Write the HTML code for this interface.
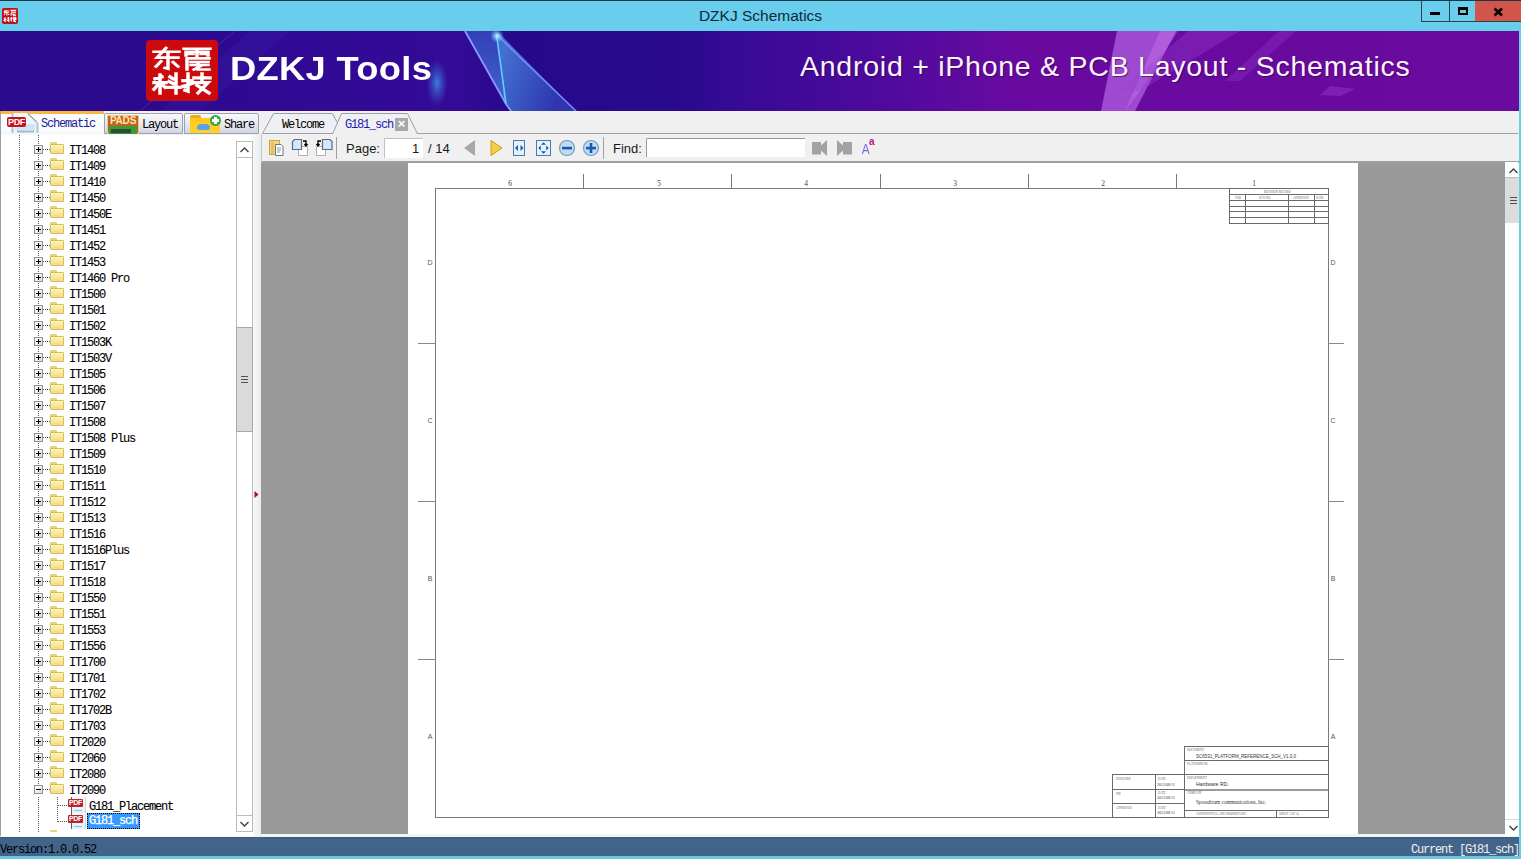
<!DOCTYPE html>
<html><head><meta charset="utf-8">
<style>
*{margin:0;padding:0;box-sizing:border-box}
html,body{width:1521px;height:859px;overflow:hidden;background:#f0f0f0;position:relative;font-family:"Liberation Sans",sans-serif}
div,span,i,b{position:absolute;display:block}
.mono{font-family:"Liberation Mono",monospace}
#title{left:0;top:0;width:1521px;height:31px;background:#69cdec;border-top:1px solid #1d4a63}
#title .t{left:0;top:6px;width:1521px;text-align:center;font-size:15.5px;line-height:18px;color:#0e2a3a}
#ticon{left:2px;top:6px;width:16px;height:17px;background:#c4161c;border-radius:2px;color:#fff;font-size:7px;line-height:8px;font-weight:bold;padding:1px 0 0 1px;letter-spacing:-0.5px}
.wb{top:-1px;height:22px;border:1px solid #2b3f4d;border-top:none;background:#69cdec}
#bmin{left:1421px;width:29px;border-right:none}
#bmax{left:1449px;width:27px}
#bcls{left:1475px;width:46px;background:#d2554a;border-left:none;border-right:none}
#banner{left:0;top:31px;width:1519px;height:80px;background:linear-gradient(90deg,#2a0b8c 0%,#2a0a8e 45%,#3a0a96 60%,#5c0aa0 75%,#6a0aa0 100%);overflow:hidden}
#rborder{left:1519px;top:31px;width:2px;height:828px;background:#69cdec}
#bborder{left:0;top:856px;width:1521px;height:3px;background:#6cc6e2}
#strip{left:0;top:833px;width:1519px;height:4px;background:#eef4fa}
#tabs{left:0;top:111px;width:1519px;height:24px;background:#f0f0f0}
#tree{left:0;top:135px;width:254px;height:701px;background:#fff;border-left:1px solid #a0a0a0;overflow:hidden}
#split{left:253px;top:135px;width:8px;height:701px;background:linear-gradient(90deg,#f6f8f9,#e8edf0)}
#toolbar{left:261px;top:134px;width:1258px;height:29px;background:#f0f0f0;border-left:1px solid #c8c8c8;border-bottom:2px solid #a0a0a0}
#doc{left:261px;top:163px;width:1244px;height:671px;background:#999}
#page{left:408px;top:163px;width:950px;height:671px;background:#fff}
#vscroll{left:1505px;top:162px;width:13px;height:674px;background:#fff}
#status{left:0;top:837px;width:1519px;height:19px;background:linear-gradient(180deg,#3c5a78 0,#43648a 2px,#43648a 17px,#3a6482 19px)}
#status .l{left:0;top:6px;font-family:"Liberation Mono",monospace;font-size:12px;letter-spacing:-1.2px;line-height:14px;color:#000}
#status .r{right:0px;top:6px;font-family:"Liberation Mono",monospace;font-size:12px;letter-spacing:-1.2px;line-height:14px;color:#f0f0f0}
/* tree */
.tx{left:69px;height:16px;-webkit-text-stroke:0.1px #000;font-family:"Liberation Mono",monospace;font-size:12px;letter-spacing:-1.2px;line-height:16px;color:#000;white-space:nowrap}
.box{left:34px;width:9px;height:9px;border:1px solid #919191;background:linear-gradient(135deg,#fff,#dcdcdc)}
.box b{left:1px;top:3px;width:5px;height:1px;background:#000}
.box i{left:3px;top:1px;width:1px;height:5px;background:#000}
.hd{left:43px;width:7px;height:1px;background:repeating-linear-gradient(90deg,#555 0 1px,transparent 1px 2px)}
.hd2{left:58px;width:10px;height:1px;background:repeating-linear-gradient(90deg,#555 0 1px,transparent 1px 2px)}
.vd{width:1px;background:repeating-linear-gradient(180deg,#555 0 1px,transparent 1px 2px)}
.fold{left:50px;width:14px;height:12px}
.fold:before{content:"";position:absolute;left:0;top:0;width:7px;height:3px;background:#e8d27a;border-radius:1px 1px 0 0}
.fold i{left:0;top:2px;width:14px;height:10px;background:linear-gradient(180deg,#fdf6b0,#f4d98c);border:1px solid #d8bb62;border-radius:1px}
.pdf{left:68px;width:16px;height:16px}
.pdf:before{content:"";position:absolute;left:3px;top:0;width:13px;height:16px;background:linear-gradient(180deg,#f4f8fc,#e4eef8);border-left:1px solid #50606e;border-right:1px solid #c8d8e8}
.pdf:after{content:"";position:absolute;left:6px;top:13px;width:8px;height:1px;background:#8ec0e8}
.pdf span{left:0;top:2px;width:15px;height:8px;border-radius:1px;background:#c0202a;color:#fff;font-size:7px;line-height:8px;font-weight:bold;text-align:center;letter-spacing:-0.3px}
.sel{-webkit-text-stroke:0.25px #fff;left:87px;width:53px;background:#3399ff;color:#fff;outline:1px dotted #000;outline-offset:-1px;padding-left:2px;height:16px;line-height:16px}
</style></head><body>
<div id="title"><div class="t">DZKJ Schematics</div><svg width="16" height="16" viewBox="0 0 72 61" preserveAspectRatio="none" style="position:absolute;left:2px;top:7px"><rect width="72" height="61" rx="8" fill="#c01018"/><g fill="none" stroke="#fff" stroke-width="5"><g transform="translate(0,8) scale(1,0.74) translate(0,-8)"><path d="M8 13 H33 M20 8 L11 21 H32 M22 16 V36 M15 26 L10 33 M27 27 L32 33"/><path d="M38 9 H64 M40 13 H62 M41 22 H63 M41 22 V37 M45 30 H62 M52 27 V37 L63 37"/></g><g transform="translate(0,34) scale(1,0.95) translate(0,-40)"><path d="M8 49 H20 M14 41 V60 M13 50 L8 56 M24 43 L27 45 M21 54 H34 M30 40 V60"/><path d="M37 47 H46 M42 40 V58 M48 44 H64 M49 49 H62 L52 60 M51 52 L63 60"/></g></g></svg>
<div id="bmin" class="wb"><i style="left:8px;top:12px;width:10px;height:3px;background:#000"></i></div>
<div id="bmax" class="wb"><i style="left:8px;top:7px;width:10px;height:8px;border:2px solid #000;border-top-width:3px"></i></div>
<div id="bcls" class="wb"><svg width="46" height="22" style="position:absolute;left:0;top:0"><path d="M19.5 8.5 L27 15.5 M27 8.5 L19.5 15.5" stroke="#000" stroke-width="2.6"/></svg></div>
</div>
<div style="left:0;top:0;width:1521px;height:1px;background:#15384c"></div>
<div id="banner"><svg width="1518" height="80" style="position:absolute;left:0;top:0">
<defs>
<linearGradient id="bg" x1="0" x2="1" y1="0" y2="0">
<stop offset="0.0000" stop-color="#2a0a8d"/><stop offset="0.0987" stop-color="#2b0a8e"/><stop offset="0.1975" stop-color="#300a94"/><stop offset="0.3028" stop-color="#340a96"/>
<stop offset="0.3423" stop-color="#240a8a"/><stop offset="0.4542" stop-color="#2a0a8e"/><stop offset="0.4806" stop-color="#360a94"/><stop offset="0.5662" stop-color="#4a0a9c"/><stop offset="0.6682" stop-color="#680aa0"/><stop offset="1.0000" stop-color="#6a0a9f"/>
</linearGradient>
<linearGradient id="bl" x1="0" x2="0" y1="0" y2="1"><stop offset="0" stop-color="#5a6ae0" stop-opacity="0.35"/><stop offset="1" stop-color="#4a7ae0" stop-opacity="0.6"/></linearGradient>
<radialGradient id="glow"><stop offset="0" stop-color="#c0f8ff" stop-opacity="1"/><stop offset="1" stop-color="#60c0ff" stop-opacity="0"/></radialGradient>
<radialGradient id="spot"><stop offset="0" stop-color="#3a8ce0" stop-opacity="0.9"/><stop offset="1" stop-color="#3a5ad0" stop-opacity="0"/></radialGradient>
<filter id="bl2"><feGaussianBlur stdDeviation="1.2"/></filter>
</defs>
<rect width="1518" height="80" fill="url(#bg)"/>
<polygon points="250,0 290,0 200,80 160,80" fill="#4a2ac0" opacity="0.18"/>
<line x1="235" y1="0" x2="140" y2="80" stroke="#6a5ae0" stroke-width="1" opacity="0.35"/>
<defs>
<linearGradient id="ab" x1="0" x2="0" y1="0" y2="1"><stop offset="0" stop-color="#3448c0"/><stop offset="1" stop-color="#4a78d8"/></linearGradient>
<linearGradient id="bc" x1="497" y1="40" x2="560" y2="60" gradientUnits="userSpaceOnUse"><stop offset="0" stop-color="#4a8ae0"/><stop offset="1" stop-color="#3040b8"/></linearGradient>
<filter id="soft" x="-20%" y="-20%" width="140%" height="140%"><feGaussianBlur stdDeviation="0.5"/></filter>
</defs>
<polygon points="465,0 497,0 507,73 511,80" fill="url(#ab)" opacity="0.85"/>
<polygon points="497,0 576,80 511,80 507,73" fill="url(#bc)" opacity="0.8"/>
<g filter="url(#soft)">
<polyline points="465,0 506,73 511,80" fill="none" stroke="#8a9aff" stroke-width="1.8"/>
<polyline points="496.5,3 506,73" fill="none" stroke="#60c8ff" stroke-width="1.8"/>
<line x1="497" y1="4" x2="576" y2="80" stroke="#7a8aff" stroke-width="1.6"/>
</g>
<circle cx="497" cy="5" r="7" fill="url(#glow)"/>
<ellipse cx="437" cy="52" rx="11" ry="24" fill="url(#spot)"/>
<polygon points="1117,0 1176,0 1135,80 1101,80" fill="#b060e0" opacity="0.75"/>
<polygon points="1160,0 1178,0 1140,60 1125,80" fill="#d080f0" opacity="0.35"/>
<polygon points="1188,0 1240,0 1140,60 1120,60" fill="#9a40d0" opacity="0.35"/>
<polygon points="1279,0 1296,0 1240,50 1225,50" fill="#9a40d0" opacity="0.3"/>
<polygon points="1330,55 1356,58 1340,65 1320,64" fill="#9a40d0" opacity="0.4"/>
</svg>
<div style="left:146px;top:9px;width:72px;height:61px;background:#cc0a0e;border-radius:4px"></div>
<svg width="72" height="61" style="position:absolute;left:146px;top:9px" fill="none" stroke="#fff" stroke-width="3.5" stroke-linecap="square">
<g transform="translate(0,8) scale(1,0.74) translate(0,-8)">
<path d="M8 13 H33 M20 8 L11 21 H32 M22 16 V36 L19 35 M15 26 L10 33 M27 27 L32 33"/>
<path d="M38 9 H64 M40 13 V18 M62 13 V18 M40 13 H62 M51 9 V19 M43 16 H47 M55 16 H59 M41 22 H63 M41 22 V37 M45 27 H62 M45 31 H62 M52 27 V37 L63 37 M55 32 L48 37"/>
</g>
<g transform="translate(0,34) scale(1,0.95) translate(0,-40)">
<path d="M9 45 L16 43 M8 49 H20 M14 41 V60 M13 50 L8 56 M15 50 L19 54 M24 43 L27 45 M23 48 L27 50 M21 54 H34 M30 40 V60"/>
<path d="M37 47 H46 M42 40 V58 L39 57 M37 53 L46 50 M48 44 H64 M56 40 V48 M49 49 H62 L52 60 M51 52 L63 60"/>
</g>
</svg>
<div id="dzkj" style="left:230px;top:18px;font-size:33px;font-weight:bold;color:#fff;letter-spacing:0.3px;line-height:40px;white-space:nowrap;transform:scaleX(1.1);transform-origin:0 0">DZKJ Tools</div>
<div style="left:800px;top:17px;font-size:28.5px;color:#fbf2ff;letter-spacing:0.75px;line-height:36px;white-space:nowrap;text-shadow:1px 1px 1px rgba(40,0,60,0.6)">Android + iPhone &amp; PCB Layout - Schematics</div>
</div>
<div id="rborder"></div>
<div id="bborder"></div><div id="strip"></div>
<div id="tabs">
<div style="left:0;top:0;width:104px;height:24px;background:linear-gradient(180deg,#fff,#f6f8fc);border-left:1px solid #a0a0a0"></div>
<div style="left:1px;top:0;width:103px;height:3px;background:#f6b840"></div>
<svg width="30" height="24" style="position:absolute;left:9px;top:0"><path d="M3 2.5 H19 L28.5 11.5 V23" fill="#f0f6fc" stroke="none"/><path d="M3 2 V23 H28.5 V11.5 L19 2 Z" fill="#eef5fb"/><path d="M3.5 2 V22 M28.5 12 V22" stroke="#b4c2ce" stroke-width="2"/><path d="M19 2.5 L28 11.5" stroke="#5a6470" stroke-width="1"/><rect x="6" y="13" width="20" height="6" fill="#cfe6f8"/><path d="M8 20.5 H25" stroke="#a6b8c6" stroke-width="2"/></svg>
<div style="left:7px;top:6px;width:19px;height:10px;background:#c4141e;border-radius:2px;color:#fff;font-size:9px;line-height:10px;font-weight:bold;text-align:center;letter-spacing:-0.4px">PDF</div>
<div class="mono" style="left:41px;top:5px;font-size:12px;letter-spacing:-1.2px;line-height:16px;color:#1b1b9a">Schematic</div>
<div style="left:104px;top:2px;width:79px;height:21px;border:1px solid #9ca3ad;border-radius:2px 2px 0 0;background:linear-gradient(180deg,#f8f8fc 0%,#e8e9f2 50%,#d2d4e4 100%)"></div>
<div style="left:107px;top:4px;width:32px;height:19px;background:#c4621a;border:1px solid #e8c88a"></div>
<div style="left:109px;top:15px;width:28px;height:8px;background:#3d9a3a"></div>
<div style="left:111px;top:18px;width:20px;height:4px;background:#2a4a3a"></div>
<div style="left:107px;top:4px;width:32px;font-size:10px;font-weight:bold;color:#ffe8b0;text-align:center;line-height:11px;letter-spacing:-0.2px">PADS</div>
<div class="mono" style="left:142px;top:6px;font-size:12px;letter-spacing:-1.2px;line-height:16px;color:#000">Layout</div>
<div style="left:184px;top:2px;width:75px;height:21px;border:1px solid #9ca3ad;border-radius:2px 2px 0 0;background:linear-gradient(180deg,#f8f8fc 0%,#e8e9f2 50%,#d2d4e4 100%)"></div>
<div style="left:190px;top:4px;width:11px;height:4px;background:#f3a81a;border-radius:2px 2px 0 0"></div>
<div style="left:190px;top:7px;width:30px;height:15px;background:linear-gradient(180deg,#ffc81a,#ffd22a);border-radius:1px"></div>
<div style="left:197px;top:13px;width:13px;height:6px;background:#5aa4e6;border-radius:6px 6px 3px 3px"></div>
<div style="left:210px;top:4px;width:11px;height:11px;background:#3aa845;border-radius:50%"></div>
<div style="left:214px;top:6px;width:3px;height:7px;background:#fff"></div>
<div style="left:212px;top:8px;width:7px;height:3px;background:#fff"></div>
<div class="mono" style="left:224px;top:6px;font-size:12px;letter-spacing:-1.2px;line-height:16px;color:#000">Share</div>
<svg style="position:absolute;left:0;top:0" width="1518" height="24">
<polygon points="262.5,22.5 273.5,2.5 332.5,2.5 343,22.5" fill="#eef0f3" stroke="#98a0a8" stroke-width="1"/>
<polygon points="332.5,23 341.5,2.5 407.5,2.5 417.5,23" fill="#f0f0f0" stroke="none"/><polyline points="332.5,23 341.5,2.5 407.5,2.5 417.5,23" fill="none" stroke="#98a0a8" stroke-width="1"/>
<line x1="417.5" y1="22.5" x2="1518" y2="22.5" stroke="#a0a0a0" stroke-width="1"/>
</svg>
<div class="mono" style="left:282px;top:6px;font-size:12px;letter-spacing:-1.2px;line-height:16px;color:#000">Welcome</div>
<div class="mono" style="left:345px;top:6px;font-size:12px;letter-spacing:-1.2px;line-height:16px;color:#1b1bb0">G181_sch</div>
<div style="left:395px;top:7px;width:13px;height:13px;background:#a8a8a8;color:#fff;font-size:13px;line-height:12px;text-align:center;font-weight:bold">&#215;</div>
</div>
<div id="tree">
<div class="vd" style="left:18px;top:0;height:697px"></div>
<div class="vd" style="left:37px;top:0;height:658px"></div><div class="vd" style="left:37px;top:662px;height:35px"></div>
<div class="vd" style="left:56px;top:662px;height:25px"></div>
</div>
<div id="treeitems" style="left:0;top:0;width:236px;height:832px;overflow:hidden">
<div class="box" style="top:145px"><i></i><b></b></div>
<div class="hd" style="top:149px"></div>
<div class="fold" style="top:142px"><i></i></div>
<div class="tx" style="top:143px">IT1408</div>
<div class="box" style="top:161px"><i></i><b></b></div>
<div class="hd" style="top:165px"></div>
<div class="fold" style="top:158px"><i></i></div>
<div class="tx" style="top:159px">IT1409</div>
<div class="box" style="top:177px"><i></i><b></b></div>
<div class="hd" style="top:181px"></div>
<div class="fold" style="top:174px"><i></i></div>
<div class="tx" style="top:175px">IT1410</div>
<div class="box" style="top:193px"><i></i><b></b></div>
<div class="hd" style="top:197px"></div>
<div class="fold" style="top:190px"><i></i></div>
<div class="tx" style="top:191px">IT1450</div>
<div class="box" style="top:209px"><i></i><b></b></div>
<div class="hd" style="top:213px"></div>
<div class="fold" style="top:206px"><i></i></div>
<div class="tx" style="top:207px">IT1450E</div>
<div class="box" style="top:225px"><i></i><b></b></div>
<div class="hd" style="top:229px"></div>
<div class="fold" style="top:222px"><i></i></div>
<div class="tx" style="top:223px">IT1451</div>
<div class="box" style="top:241px"><i></i><b></b></div>
<div class="hd" style="top:245px"></div>
<div class="fold" style="top:238px"><i></i></div>
<div class="tx" style="top:239px">IT1452</div>
<div class="box" style="top:257px"><i></i><b></b></div>
<div class="hd" style="top:261px"></div>
<div class="fold" style="top:254px"><i></i></div>
<div class="tx" style="top:255px">IT1453</div>
<div class="box" style="top:273px"><i></i><b></b></div>
<div class="hd" style="top:277px"></div>
<div class="fold" style="top:270px"><i></i></div>
<div class="tx" style="top:271px">IT1460&nbsp;Pro</div>
<div class="box" style="top:289px"><i></i><b></b></div>
<div class="hd" style="top:293px"></div>
<div class="fold" style="top:286px"><i></i></div>
<div class="tx" style="top:287px">IT1500</div>
<div class="box" style="top:305px"><i></i><b></b></div>
<div class="hd" style="top:309px"></div>
<div class="fold" style="top:302px"><i></i></div>
<div class="tx" style="top:303px">IT1501</div>
<div class="box" style="top:321px"><i></i><b></b></div>
<div class="hd" style="top:325px"></div>
<div class="fold" style="top:318px"><i></i></div>
<div class="tx" style="top:319px">IT1502</div>
<div class="box" style="top:337px"><i></i><b></b></div>
<div class="hd" style="top:341px"></div>
<div class="fold" style="top:334px"><i></i></div>
<div class="tx" style="top:335px">IT1503K</div>
<div class="box" style="top:353px"><i></i><b></b></div>
<div class="hd" style="top:357px"></div>
<div class="fold" style="top:350px"><i></i></div>
<div class="tx" style="top:351px">IT1503V</div>
<div class="box" style="top:369px"><i></i><b></b></div>
<div class="hd" style="top:373px"></div>
<div class="fold" style="top:366px"><i></i></div>
<div class="tx" style="top:367px">IT1505</div>
<div class="box" style="top:385px"><i></i><b></b></div>
<div class="hd" style="top:389px"></div>
<div class="fold" style="top:382px"><i></i></div>
<div class="tx" style="top:383px">IT1506</div>
<div class="box" style="top:401px"><i></i><b></b></div>
<div class="hd" style="top:405px"></div>
<div class="fold" style="top:398px"><i></i></div>
<div class="tx" style="top:399px">IT1507</div>
<div class="box" style="top:417px"><i></i><b></b></div>
<div class="hd" style="top:421px"></div>
<div class="fold" style="top:414px"><i></i></div>
<div class="tx" style="top:415px">IT1508</div>
<div class="box" style="top:433px"><i></i><b></b></div>
<div class="hd" style="top:437px"></div>
<div class="fold" style="top:430px"><i></i></div>
<div class="tx" style="top:431px">IT1508&nbsp;Plus</div>
<div class="box" style="top:449px"><i></i><b></b></div>
<div class="hd" style="top:453px"></div>
<div class="fold" style="top:446px"><i></i></div>
<div class="tx" style="top:447px">IT1509</div>
<div class="box" style="top:465px"><i></i><b></b></div>
<div class="hd" style="top:469px"></div>
<div class="fold" style="top:462px"><i></i></div>
<div class="tx" style="top:463px">IT1510</div>
<div class="box" style="top:481px"><i></i><b></b></div>
<div class="hd" style="top:485px"></div>
<div class="fold" style="top:478px"><i></i></div>
<div class="tx" style="top:479px">IT1511</div>
<div class="box" style="top:497px"><i></i><b></b></div>
<div class="hd" style="top:501px"></div>
<div class="fold" style="top:494px"><i></i></div>
<div class="tx" style="top:495px">IT1512</div>
<div class="box" style="top:513px"><i></i><b></b></div>
<div class="hd" style="top:517px"></div>
<div class="fold" style="top:510px"><i></i></div>
<div class="tx" style="top:511px">IT1513</div>
<div class="box" style="top:529px"><i></i><b></b></div>
<div class="hd" style="top:533px"></div>
<div class="fold" style="top:526px"><i></i></div>
<div class="tx" style="top:527px">IT1516</div>
<div class="box" style="top:545px"><i></i><b></b></div>
<div class="hd" style="top:549px"></div>
<div class="fold" style="top:542px"><i></i></div>
<div class="tx" style="top:543px">IT1516Plus</div>
<div class="box" style="top:561px"><i></i><b></b></div>
<div class="hd" style="top:565px"></div>
<div class="fold" style="top:558px"><i></i></div>
<div class="tx" style="top:559px">IT1517</div>
<div class="box" style="top:577px"><i></i><b></b></div>
<div class="hd" style="top:581px"></div>
<div class="fold" style="top:574px"><i></i></div>
<div class="tx" style="top:575px">IT1518</div>
<div class="box" style="top:593px"><i></i><b></b></div>
<div class="hd" style="top:597px"></div>
<div class="fold" style="top:590px"><i></i></div>
<div class="tx" style="top:591px">IT1550</div>
<div class="box" style="top:609px"><i></i><b></b></div>
<div class="hd" style="top:613px"></div>
<div class="fold" style="top:606px"><i></i></div>
<div class="tx" style="top:607px">IT1551</div>
<div class="box" style="top:625px"><i></i><b></b></div>
<div class="hd" style="top:629px"></div>
<div class="fold" style="top:622px"><i></i></div>
<div class="tx" style="top:623px">IT1553</div>
<div class="box" style="top:641px"><i></i><b></b></div>
<div class="hd" style="top:645px"></div>
<div class="fold" style="top:638px"><i></i></div>
<div class="tx" style="top:639px">IT1556</div>
<div class="box" style="top:657px"><i></i><b></b></div>
<div class="hd" style="top:661px"></div>
<div class="fold" style="top:654px"><i></i></div>
<div class="tx" style="top:655px">IT1700</div>
<div class="box" style="top:673px"><i></i><b></b></div>
<div class="hd" style="top:677px"></div>
<div class="fold" style="top:670px"><i></i></div>
<div class="tx" style="top:671px">IT1701</div>
<div class="box" style="top:689px"><i></i><b></b></div>
<div class="hd" style="top:693px"></div>
<div class="fold" style="top:686px"><i></i></div>
<div class="tx" style="top:687px">IT1702</div>
<div class="box" style="top:705px"><i></i><b></b></div>
<div class="hd" style="top:709px"></div>
<div class="fold" style="top:702px"><i></i></div>
<div class="tx" style="top:703px">IT1702B</div>
<div class="box" style="top:721px"><i></i><b></b></div>
<div class="hd" style="top:725px"></div>
<div class="fold" style="top:718px"><i></i></div>
<div class="tx" style="top:719px">IT1703</div>
<div class="box" style="top:737px"><i></i><b></b></div>
<div class="hd" style="top:741px"></div>
<div class="fold" style="top:734px"><i></i></div>
<div class="tx" style="top:735px">IT2020</div>
<div class="box" style="top:753px"><i></i><b></b></div>
<div class="hd" style="top:757px"></div>
<div class="fold" style="top:750px"><i></i></div>
<div class="tx" style="top:751px">IT2060</div>
<div class="box" style="top:769px"><i></i><b></b></div>
<div class="hd" style="top:773px"></div>
<div class="fold" style="top:766px"><i></i></div>
<div class="tx" style="top:767px">IT2080</div>
<div class="box" style="top:785px"><b></b></div>
<div class="hd" style="top:789px"></div>
<div class="fold" style="top:782px"><i></i></div>
<div class="tx" style="top:783px">IT2090</div>
<div class="hd2" style="top:805px"></div>
<div class="pdf" style="top:797px"><span>PDF</span></div>
<div class="tx" style="top:799px;left:89px">G181_Placement</div>
<div class="hd2" style="top:821px"></div>
<div class="pdf" style="top:813px"><span>PDF</span></div>
<div class="tx sel" style="top:813px;line-height:16px">G181_sch</div>
<div class="fold" style="top:830px"><i></i></div>
</div>
<div id="split"></div>
<div id="toolbar">
<svg width="1257" height="28" style="position:absolute;left:-1px;top:0">
<g transform="translate(-261,-134)">
<!-- icon1 folder+doc -->
<rect x="269.5" y="140.5" width="10" height="14" fill="#f3d680" stroke="#c9a54a"/>
<rect x="271" y="142" width="3" height="12" fill="#e8c060"/>
<path d="M275.5 144.5 H281 L283 146.5 V155.5 H275.5 Z" fill="#fff" stroke="#6b7480"/>
<path d="M277 148 H281 M277 150 H281 M277 152 H280" stroke="#8aa0b8"/>
<!-- icon2 -->
<path d="M298.5 146.5 H307.5 V155.5 H298.5 Z" fill="#fff" stroke="#b0b0b0"/>
<path d="M292.5 141.5 L294.5 139.5 H301.5 V149.5 H292.5 Z" fill="#d4e8fa" stroke="#5a6a80" stroke-width="1.2"/>
<path d="M303 141 H306 V145 M304.5 144 L306 146 L307.5 144" fill="none" stroke="#000" stroke-width="1.3"/>
<!-- icon3 -->
<path d="M316.5 146.5 H325.5 V155.5 H316.5 Z" fill="#fff" stroke="#b0b0b0"/>
<path d="M322.5 139.5 H330 L332 141.5 V149.5 H322.5 Z" fill="#d4e8fa" stroke="#5a6a80" stroke-width="1.2"/>
<path d="M321 141 H318 V145 M316.5 144 L318 146 L319.5 144" fill="none" stroke="#000" stroke-width="1.3"/>
<line x1="336.5" y1="137" x2="336.5" y2="159" stroke="#a0a0a0"/>
<!-- page input -->
<rect x="384" y="138" width="39" height="20" fill="#fff"/>
<path d="M384.5 158 V138.5 H423" fill="none" stroke="#c0c0c0"/>
<!-- prev -->
<path d="M475 140 V156 L464 148 Z" fill="#a8a8a8"/>
<!-- next -->
<path d="M491 140.5 V155.5 L502 148 Z" fill="#f2d040" stroke="#c8a020" stroke-width="1"/>
<!-- fit width -->
<rect x="513.5" y="140.5" width="11" height="15" fill="#e6f0fa" stroke="#4a78b0"/>
<path d="M515 148 L518 145 V151 Z M523.5 148 L520.5 145 V151 Z" fill="#1a5aa8"/>
<!-- fit page -->
<rect x="536.5" y="140.5" width="14" height="15" fill="#e6f0fa" stroke="#4a78b0"/>
<path d="M543.5 142.3 L541 144.8 H546 Z M543.5 153.7 L541 151.2 H546 Z M538.3 148 L540.8 145.5 V150.5 Z M548.7 148 L546.2 145.5 V150.5 Z" fill="#1a5aa8"/>
<!-- zoom out -->
<circle cx="567" cy="148" r="7.5" fill="#bcdcf8" stroke="#7a9ab8" stroke-width="1.2"/>
<rect x="562" y="146.8" width="10" height="2.6" fill="#1a5aa8"/>
<!-- zoom in -->
<circle cx="591" cy="148" r="7.5" fill="#bcdcf8" stroke="#7a9ab8" stroke-width="1.2"/>
<rect x="586" y="146.8" width="10" height="2.6" fill="#1a5aa8"/>
<rect x="589.7" y="143" width="2.6" height="10" fill="#1a5aa8"/>
<line x1="603.5" y1="137" x2="603.5" y2="159" stroke="#a0a0a0"/>
<!-- find input -->
<rect x="646" y="138" width="159" height="19" fill="#fff"/>
<path d="M646.5 157 V138.5 H805" fill="none" stroke="#9a9a9a"/>
<!-- find prev/next -->
<path d="M812 142 H821 V145.5 L827 140 V156 L821 150.5 V154.5 H812 Z" fill="#a2a2a2"/>
<path d="M852 142 H843 V145.5 L837 140 V156 L843 150.5 V154.5 H852 Z" fill="#a2a2a2"/>
</g>
</svg>
<div style="left:84px;top:7px;font-size:13px;color:#1a1a1a;line-height:16px">Page:</div>
<div style="left:150px;top:7px;font-size:13px;color:#1a1a1a;line-height:16px">1</div>
<div style="left:166px;top:7px;font-size:13px;color:#1a1a1a;line-height:16px">/ 14</div>
<div style="left:351px;top:7px;font-size:13px;color:#1a1a1a;line-height:16px">Find:</div>
<div style="left:599px;top:7px;font-size:14px;color:#7a6ad8;line-height:16px;font-weight:normal;transform:scaleX(0.85)">A</div>
<div style="left:607px;top:2px;font-size:10px;color:#b8207a;line-height:12px;font-weight:bold">a</div>
</div>
<div id="doc"></div>
<div id="page"></div>
<div id="vscroll"></div>
<div id="status"><div class="l">Version:1.0.0.52</div><div class="r">Current [G181_sch]</div></div>
<svg width="950" height="671" style="position:absolute;left:408px;top:163px" font-family="Liberation Serif" shape-rendering="crispEdges">
<g transform="translate(-408,-163)" stroke="#6a6a6a" fill="none" stroke-width="1">
<rect x="435.5" y="188.5" width="893" height="629" stroke="#7a7a7a"/>
<path d="M583.5 174 V188 M731.5 174 V188 M880.5 174 V188 M1028.5 174 V188 M1176.5 174 V188" stroke="#7a7a7a"/>
<path d="M418 343.5 H435 M418 501.5 H435 M418 659.5 H435 M1328 343.5 H1344 M1328 501.5 H1344 M1328 659.5 H1344" stroke="#8a8a8a"/>
<rect x="1229.5" y="188.5" width="99" height="35"/>
<path d="M1229 194.5 H1328 M1229 200.5 H1328 M1229 206.5 H1328 M1229 211.5 H1328 M1229 217.5 H1328 M1245.5 194 V223 M1288.5 194 V223 M1314.5 194 V223"/>
<rect x="1184.5" y="746.5" width="144" height="71"/>
<path d="M1184 760.5 H1328 M1184 774.5 H1328 M1184 810.5 H1328 M1276.5 810 V817"/>
<path d="M1184 789.5 H1328" stroke="#9a9a9a" stroke-width="2"/>
<rect x="1112.5" y="774.5" width="72" height="43"/>
<path d="M1112 789.5 H1184 M1112 803.5 H1184 M1155.5 774 V817"/>
</g>
<g transform="translate(-408,-163)" fill="#444" font-size="7.5" text-anchor="middle" shape-rendering="auto">
<text x="510" y="186">6</text><text x="659" y="186">5</text><text x="806" y="186">4</text><text x="955" y="186">3</text><text x="1103" y="186">2</text><text x="1254" y="186">1</text>
</g><g transform="translate(-408,-163)" fill="#555" font-size="7" font-family="Liberation Sans" text-anchor="middle" shape-rendering="auto">
<text x="430" y="265">D</text><text x="430" y="423">C</text><text x="430" y="581">B</text><text x="430" y="739">A</text>
<text x="1333" y="265">D</text><text x="1333" y="423">C</text><text x="1333" y="581">B</text><text x="1333" y="739">A</text>
</g>
<g transform="translate(-408,-163)" fill="#666" font-size="3" shape-rendering="auto">
<text x="1264" y="193">REVISION RECORD</text>
<text x="1235" y="199">VER</text><text x="1259" y="199">ECN NO.</text><text x="1293" y="199">APPROVED</text><text x="1316" y="199">DATE</text>
<text x="1187" y="751">DOCUMENT</text>
<text x="1187" y="765">PLATFORM NO.</text>
<text x="1187" y="779">DEPARTMENT</text>
<text x="1187" y="794">COMPANY</text>
<text x="1196" y="815">CONFIDENTIAL AND PROPRIETARY</text>
<text x="1279" y="815">SHEET 1 OF 14</text>
<text x="1116" y="780">DESIGNER</text><text x="1116" y="795">PM</text><text x="1116" y="809">APPROVED</text>
<text x="1158" y="780">DATE</text><text x="1158" y="794">DATE</text><text x="1158" y="809">DATE</text>
</g>
<g transform="translate(-408,-163)" fill="#333" shape-rendering="auto">
<text x="1196" y="757.5" font-size="5.2" font-family="Liberation Sans" textLength="100" lengthAdjust="spacingAndGlyphs">SC6531_PLATFORM_REFERENCE_SCH_V1.0.0</text>
<text x="1196" y="786" font-size="5.2" font-family="Liberation Sans">Hardware RD.</text>
<text x="1196" y="804" font-size="5.5" textLength="70" lengthAdjust="spacingAndGlyphs">Spreadtrum communications, Inc.</text>
<text x="1157" y="786" font-size="4">2012/08/11</text><text x="1157" y="799" font-size="4">2012/08/11</text><text x="1157" y="814" font-size="4">2012/08/11</text>
</g>
</svg>
<!-- tree scrollbar -->
<div style="left:236px;top:141px;width:17px;height:691px;background:#fff;border-left:1px solid #bcbcbc;border-right:1px solid #bcbcbc"></div>
<div style="left:236px;top:141px;width:17px;height:17px;border:1px solid #bcbcbc;background:#fff"></div>
<div style="left:236px;top:815px;width:17px;height:17px;border:1px solid #bcbcbc;background:#fff"></div>
<svg width="17" height="697" style="position:absolute;left:236px;top:135px" fill="none" stroke="#404040" stroke-width="1.4">
<path d="M4.5 17 L8.5 13 L12.5 17"/><path d="M4.5 687 L8.5 691 L12.5 687"/>
</svg>
<div style="left:236px;top:327px;width:17px;height:105px;background:#dadada;border:1px solid #a8a8a8"></div>
<div style="left:241px;top:376px;width:7px;height:7px;background:repeating-linear-gradient(180deg,#505050 0 1px,transparent 1px 3px)"></div>
<!-- splitter arrow -->
<svg width="8" height="10" style="position:absolute;left:253px;top:489px"><path d="M1.5 2 L5.5 5.5 L1.5 9 Z" fill="#b01018"/></svg>
<!-- right vscroll -->
<div style="left:1505px;top:163px;width:14px;height:671px;background:#fff"></div><div style="left:1505px;top:819px;width:14px;height:1px;background:#d8d8d8"></div>
<div style="left:1505px;top:177px;width:14px;height:46px;background:#dcdcdc;border-top:1px solid #c0c0c0"></div>
<div style="left:1510px;top:197px;width:7px;height:7px;background:repeating-linear-gradient(180deg,#505050 0 1px,transparent 1px 3px)"></div>
<svg width="14" height="674" style="position:absolute;left:1505px;top:162px" fill="none" stroke="#404040" stroke-width="1.4">
<path d="M4.5 11 L8.5 7 L12.5 11"/><path d="M4.5 664 L8.5 668 L12.5 664"/>
</svg>
</body></html>
